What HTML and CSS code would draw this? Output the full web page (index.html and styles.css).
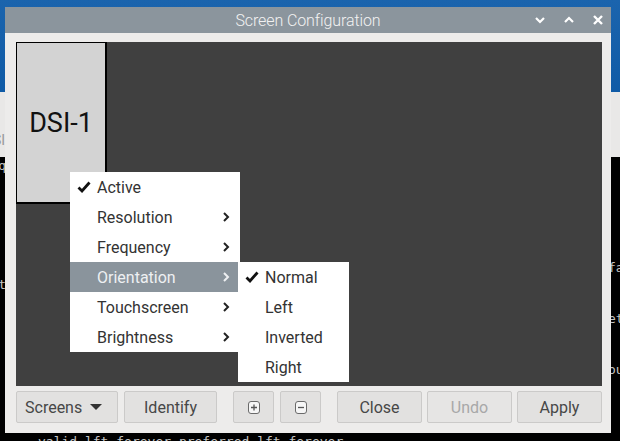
FILE: index.html
```html
<!DOCTYPE html>
<html lang="en">
<head>
  <meta charset="UTF-8">
  <meta name="viewport" content="width=device-width, initial-scale=1.0">
  <title>Screen Configuration</title>
  <link rel="stylesheet" href="styles.css">
</head>
<body>
  <div class="desktop"></div>

  <!-- terminal behind the dialog -->
  <div class="terminal">
    <div class="term-head">
      <div class="term-menu">DSI</div>
    </div>
    <div class="term-body">
      <div class="line"><span>seq</span><span></span></div>
      <div class="line"></div>
      <div class="line"></div>
      <div class="line"></div>
      <div class="line"></div>
      <div class="line"></div>
      <div class="line"><span></span><span>fault</span></div>
      <div class="line"><span>ast</span><span></span></div>
      <div class="line"></div>
      <div class="line"><span></span><span>eth0</span></div>
      <div class="line"></div>
      <div class="line"></div>
      <div class="line"><span></span><span>oute</span></div>
      <div class="line"></div>
      <div class="line"></div>
      <div class="line"></div>
      <div class="line"><span class="indent">valid_lft forever preferred_lft forever</span></div>
    </div>
  </div>

  <div class="dialog">
    <div class="titlebar">
      <span class="title">Screen Configuration</span>
      <div class="win-btns">
        <svg width="12" height="12" viewBox="0 0 12 12"><path d="M2 4 L6 8 L10 4" fill="none" stroke="#fff" stroke-width="2.2"/></svg>
        <svg width="12" height="12" viewBox="0 0 12 12"><path d="M2 8 L6 4 L10 8" fill="none" stroke="#fff" stroke-width="2.2"/></svg>
        <svg width="12" height="12" viewBox="0 0 12 12"><path d="M2 2 L10 10 M10 2 L2 10" fill="none" stroke="#fff" stroke-width="2.4"/></svg>
      </div>
    </div>

    <div class="content">
      <div class="canvas">
        <div class="screen">DSI-1</div>

        <div class="menu main-menu">
          <div class="item"><svg class="check" width="14" height="12" viewBox="0 0 14 12"><path d="M1.5 6.5 L5 10 L12.5 1.5" fill="none" stroke="#111" stroke-width="2.8"/></svg>Active</div>
          <div class="item">Resolution<svg class="arrow" width="8" height="10" viewBox="0 0 8 10"><path d="M2 1 L6 5 L2 9" fill="none" stroke="currentColor" stroke-width="2"/></svg></div>
          <div class="item">Frequency<svg class="arrow" width="8" height="10" viewBox="0 0 8 10"><path d="M2 1 L6 5 L2 9" fill="none" stroke="currentColor" stroke-width="2"/></svg></div>
          <div class="item hover">Orientation<svg class="arrow" width="8" height="10" viewBox="0 0 8 10"><path d="M2 1 L6 5 L2 9" fill="none" stroke="currentColor" stroke-width="2"/></svg></div>
          <div class="item">Touchscreen<svg class="arrow" width="8" height="10" viewBox="0 0 8 10"><path d="M2 1 L6 5 L2 9" fill="none" stroke="currentColor" stroke-width="2"/></svg></div>
          <div class="item">Brightness<svg class="arrow" width="8" height="10" viewBox="0 0 8 10"><path d="M2 1 L6 5 L2 9" fill="none" stroke="currentColor" stroke-width="2"/></svg></div>
        </div>

        <div class="menu sub-menu">
          <div class="item"><svg class="check" width="14" height="12" viewBox="0 0 14 12"><path d="M1.5 6.5 L5 10 L12.5 1.5" fill="none" stroke="#111" stroke-width="2.8"/></svg>Normal</div>
          <div class="item">Left</div>
          <div class="item">Inverted</div>
          <div class="item">Right</div>
        </div>
      </div>

      <div class="buttons">
        <button class="btn screens">Screens <svg width="12" height="8" viewBox="0 0 12 8"><path d="M0 1 L12 1 L6 7 Z" fill="#333"/></svg></button>
        <button class="btn identify">Identify</button>
        <button class="btn small">
          <svg width="12" height="13" viewBox="0 0 12 13"><rect x="0.5" y="0.5" width="11" height="12" rx="2.5" fill="#f6f6f6" stroke="#6a6a6a"/><path d="M6 3.5 V9.5 M3 6.5 H9" stroke="#555" stroke-width="1.3"/></svg>
        </button>
        <button class="btn small">
          <svg width="12" height="13" viewBox="0 0 12 13"><rect x="0.5" y="0.5" width="11" height="12" rx="2.5" fill="#f6f6f6" stroke="#6a6a6a"/><path d="M3 6.5 H9" stroke="#555" stroke-width="1.3"/></svg>
        </button>
        <button class="btn wide">Close</button>
        <button class="btn wide" disabled>Undo</button>
        <button class="btn wide">Apply</button>
      </div>
    </div>
  </div>
</body>
</html>
```

FILE: styles.css
```css
body {
  margin: 0;
  width: 620px;
  height: 441px;
  position: relative;
  overflow: hidden;
  background: #000;
  font-family: Roboto, "Liberation Sans", sans-serif;
}

/* desktop + terminal window behind */
.desktop {
  position: absolute;
  top: 0; left: 0; right: 0;
  height: 100px;
  background: linear-gradient(180deg, #1b64ad 0%, #0e5aa6 100%);
}
.terminal {
  position: absolute;
  top: 92px; left: 0; right: 0; bottom: 0;
  background: #000;
}
.term-head {
  height: 65px;
  background: #e9e8e7;
  color: #999;
  font-size: 14px;
}
.term-menu {
  padding: 40px 0 0 0;
  width: 5px;
  overflow: hidden;
  direction: rtl;
}
.term-body {
  font-family: "DejaVu Sans Mono", monospace;
  font-size: 13px;
  line-height: 17px;
  color: #c4c4c4;
}
.line {
  height: 17px;
  display: flex;
  justify-content: space-between;
  overflow: hidden;
  white-space: pre;
}
.line span:first-child:not(.indent) {
  width: 6px;
  overflow: hidden;
  direction: rtl;
}
.line span:last-child:not(.indent) {
  width: 12px;
  overflow: hidden;
}
.line .indent {
  padding: 4px 0 0 38px;
}

/* dialog window */
.dialog {
  position: absolute;
  top: 7px;
  left: 5px;
  width: 606px;
  height: 426px;
  background: #edeceb;
}
.titlebar {
  height: 26px;
  background: #8b959d;
  position: relative;
  display: flex;
  align-items: center;
  justify-content: center;
}
.title {
  color: #f2f2f2;
  font-size: 16px;
  font-weight: 300;
  letter-spacing: -0.1px;
}
.win-btns {
  position: absolute;
  right: 7px;
  top: 7px;
  display: flex;
  gap: 17px;
}
.win-btns svg { display: block; }

.content {
  padding: 9px 9px 10px 11px;
}
.canvas {
  height: 344px;
  background: #404040;
  position: relative;
}
.screen {
  position: absolute;
  top: 0; left: 0;
  width: 88px;
  height: 159px;
  background: #d3d3d3;
  border: 1px solid #000;
  border-width: 1px 2px 2px 1px;
  display: flex;
  align-items: center;
  justify-content: center;
  font-size: 27px;
  color: #111;
}

/* popup menus */
.menu {
  position: absolute;
  background: #fff;
  font-size: 16px;
  color: #333;
}
.main-menu {
  left: 54px;
  top: 130px;
  width: 170px;
}
.sub-menu {
  left: 222px;
  top: 220px;
  width: 111px;
}
.item {
  height: 30px;
  display: flex;
  align-items: center;
  padding-left: 27px;
  position: relative;
}
.item.hover {
  background: #8a949c;
  color: #eef0f2;
}
.check {
  position: absolute;
  left: 7px;
  top: 9px;
}
.arrow {
  position: absolute;
  right: 10px;
  top: 10px;
  color: #222;
}
.item.hover .arrow { color: #eef0f2; }

/* bottom buttons */
.buttons {
  display: flex;
  margin-top: 5px;
}
.btn {
  height: 32px;
  margin-right: 6px;
  background: #e2e1e0;
  border: 1px solid #cbcac9;
  border-radius: 2px;
  font-family: Roboto, "Liberation Sans", sans-serif;
  font-size: 16px;
  color: #474747;
  padding: 0;
  display: flex;
  align-items: center;
  justify-content: center;
}
.btn.screens { width: 102px; gap: 8px; justify-content: flex-start; padding-left: 8px; }
.btn.identify { width: 93px; margin-right: 16px; }
.btn.small { width: 41px; }
.btn.small + .btn.wide { margin-left: 10px; }
.btn.wide { width: 85px; margin-right: 5px; }
.btn.wide:last-child { margin-right: 0; }
.btn:disabled { color: #a8a8a8; background: #e6e5e4; }
.btn svg { display: block; }
```
